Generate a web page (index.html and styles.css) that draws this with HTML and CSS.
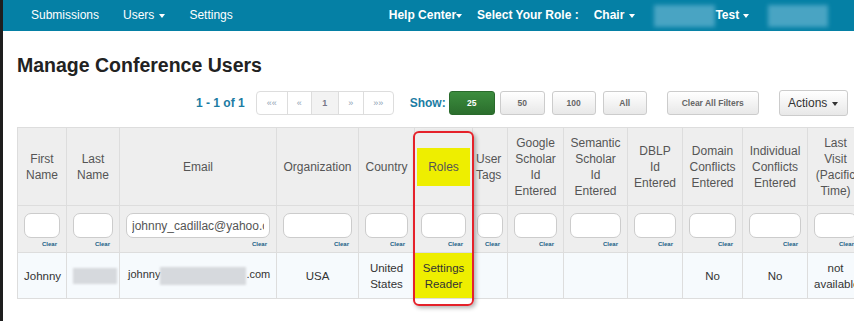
FILE: index.html
```html
<!DOCTYPE html>
<html lang="en">
<head>
    <meta charset="UTF-8">
    <meta name="viewport" content="width=device-width, initial-scale=1.0">
    <title>Manage Conference Users</title>
    <link rel="stylesheet" href="styles.css">
</head>
<body>
    <div class="page">
        <nav class="topbar">
            <ul class="nav-left">
                <li>Submissions</li>
                <li>Users<span class="caret"></span></li>
                <li>Settings</li>
            </ul>
            <ul class="nav-right">
                <li class="help">Help Center<span class="caret tight"></span></li>
                <li class="role-label">Select Your Role :</li>
                <li class="role">Chair<span class="caret"></span></li>
                <li class="user"><span class="blurred wide"></span>Test<span class="caret"></span></li>
                <li class="conf"><span class="blurred"></span></li>
            </ul>
        </nav>

        <div class="content">
            <h1>Manage Conference Users</h1>

            <div class="toolbar">
                <span class="count">1 - 1 of 1</span>
                <ul class="pager">
                    <li class="p-first">&laquo;&laquo;</li>
                    <li class="p-prev">&laquo;</li>
                    <li class="p-num active">1</li>
                    <li class="p-next">&raquo;</li>
                    <li class="p-last">&raquo;&raquo;</li>
                </ul>
                <span class="show-label">Show:</span>
                <button class="btn btn-25 selected">25</button>
                <button class="btn btn-50">50</button>
                <button class="btn btn-100">100</button>
                <button class="btn btn-all">All</button>
                <button class="btn btn-clear">Clear All Filters</button>
                <button class="btn btn-actions">Actions<span class="caret dark"></span></button>
            </div>

            <div class="table-wrap">
                <table class="users">
                    <colgroup>
                        <col class="c-first">
                        <col class="c-last">
                        <col class="c-email">
                        <col class="c-org">
                        <col class="c-country">
                        <col class="c-roles">
                        <col class="c-tags">
                        <col class="c-google">
                        <col class="c-semantic">
                        <col class="c-dblp">
                        <col class="c-domain">
                        <col class="c-indiv">
                        <col class="c-visit">
                    </colgroup>
                    <thead>
                        <tr class="head-row">
                            <th>First Name</th>
                            <th>Last Name</th>
                            <th>Email</th>
                            <th>Organization</th>
                            <th>Country</th>
                            <th class="roles-head"><span class="mark">Roles</span></th>
                            <th class="narrow">User Tags</th>
                            <th>Google Scholar Id Entered</th>
                            <th>Semantic Scholar Id Entered</th>
                            <th>DBLP Id Entered</th>
                            <th>Domain Conflicts Entered</th>
                            <th>Individual Conflicts Entered</th>
                            <th>Last Visit (Pacific Time)</th>
                        </tr>
                        <tr class="filter-row">
                            <td><input type="text"><div class="clear">Clear</div></td>
                            <td><input type="text"><div class="clear">Clear</div></td>
                            <td><input type="text" value="johnny_cadillac@yahoo.com"><div class="clear">Clear</div></td>
                            <td><input type="text"><div class="clear">Clear</div></td>
                            <td><input type="text"><div class="clear">Clear</div></td>
                            <td><input type="text"><div class="clear">Clear</div></td>
                            <td class="narrow"><input type="text"><div class="clear">Clear</div></td>
                            <td><input type="text"><div class="clear">Clear</div></td>
                            <td><input type="text"><div class="clear">Clear</div></td>
                            <td><input type="text"><div class="clear">Clear</div></td>
                            <td><input type="text"><div class="clear">Clear</div></td>
                            <td><input type="text"><div class="clear">Clear</div></td>
                            <td><input type="text"><div class="clear">Clear</div></td>
                        </tr>
                    </thead>
                    <tbody>
                        <tr class="data-row">
                            <td>Johnny</td>
                            <td><span class="blurred cell-blur"></span></td>
                            <td class="email">johnny<span class="blurred mail-blur"></span>.com</td>
                            <td>USA</td>
                            <td>United States</td>
                            <td class="roles-cell">Settings Reader</td>
                            <td></td>
                            <td></td>
                            <td></td>
                            <td></td>
                            <td>No</td>
                            <td>No</td>
                            <td>not available</td>
                        </tr>
                    </tbody>
                </table>
                <div class="callout"></div>
            </div>
        </div>
    </div>
</body>
</html>
```

FILE: styles.css
```css
* {
    margin: 0;
    padding: 0;
    box-sizing: border-box;
    font-family: "Liberation Sans", Arial, sans-serif;
}

html, body {
    overflow: hidden;
    background-color: white;
}

.page {
    border-left: 3px solid #1e1e1e;
    min-height: 321px;
}

/* top navigation */

.topbar {
    display: flex;
    height: 31px;
    background-color: #0580a5;
    color: white;
    font-size: 12px;
    line-height: 31px;
}

.topbar ul {
    display: flex;
    list-style: none;
}

.nav-left {
    padding-left: 16px;
}

.nav-left li {
    padding: 0 12px;
}

.nav-right {
    margin-left: 144px;
    font-weight: bold;
}

.nav-right li {
    display: flex;
    align-items: center;
}

.role-label {
    margin-left: 15px;
}

.role {
    margin-left: 15px;
}

.user {
    margin-left: 19px;
}

.conf {
    margin-left: 19px;
}

.caret {
    display: inline-block;
    width: 0;
    height: 0;
    margin-left: 5px;
    border-top: 4px solid white;
    border-left: 3.5px solid transparent;
    border-right: 3.5px solid transparent;
    vertical-align: middle;
}

.caret.tight {
    margin-left: 0;
}

.user .caret {
    margin-left: 4px;
}

.caret.dark {
    border-top-color: #333;
    margin-left: 5px;
}

.blurred {
    display: inline-block;
    background-color: #5aaecb;
    filter: blur(2px);
}

.topbar .blurred {
    width: 60px;
    height: 22px;
    opacity: 0.8;
}

.topbar .blurred.wide {
    width: 61px;
}

/* page content */

.content {
    padding-left: 14px;
}

h1 {
    margin-top: 23px;
    font-size: 19.5px;
    line-height: 22px;
    color: #222;
    font-weight: bold;
}

.toolbar {
    display: flex;
    align-items: center;
    height: 26px;
    margin-top: 14px;
}

.count {
    margin-left: 179px;
    color: #1b7ca3;
    font-size: 12px;
    font-weight: bold;
}

.pager {
    display: flex;
    list-style: none;
    height: 24px;
    margin-left: 11px;
    border: 1px solid #ddd;
    border-radius: 4px;
    overflow: hidden;
}

.pager li {
    display: flex;
    align-items: center;
    justify-content: center;
    border-left: 1px solid #ddd;
    color: #8fa3b3;
    font-size: 9px;
}

.pager li:first-child {
    border-left: none;
}

.pager .p-first { width: 30px; }
.pager .p-prev { width: 24px; }
.pager .p-num { width: 27px; }
.pager .p-next { width: 25px; }
.pager .p-last { width: 30px; }

.pager .active {
    background-color: #f3f3f3;
    color: #778;
    font-weight: bold;
}

.show-label {
    margin-left: 16px;
    color: #1b7ca3;
    font-size: 12px;
    font-weight: bold;
}

.btn {
    height: 24px;
    margin-left: 6px;
    border: 1px solid #ccc;
    border-radius: 3px;
    background: linear-gradient(#ffffff, #e8e8e8);
    color: #666;
    font-size: 8.5px;
    font-weight: bold;
}

.btn-25 {
    width: 46px;
    margin-left: 3px;
}

.btn-50 {
    width: 45px;
    margin-left: 5px;
}

.btn-100 {
    width: 44px;
    margin-left: 7px;
}

.btn-all {
    width: 44px;
    margin-left: 7px;
}

.btn-clear {
    width: 92px;
    margin-left: 20px;
}

.btn-actions {
    width: 69px;
    height: 26px;
    margin-left: 20px;
    color: #333;
    font-size: 12px;
    font-weight: normal;
}

.btn.selected {
    background: linear-gradient(#3c8d3e, #2b6e2d);
    border-color: #2a6a2c;
    color: white;
}

/* table */

.table-wrap {
    position: relative;
    margin-top: 11px;
}

.users {
    width: 846px;
    table-layout: fixed;
    border-collapse: collapse;
    border: 1px solid #ddd;
}

.c-first { width: 49px; }
.c-last { width: 53px; }
.c-email { width: 157px; }
.c-org { width: 82px; }
.c-country { width: 56px; }
.c-roles { width: 58px; }
.c-tags { width: 35px; }
.c-google { width: 56px; }
.c-semantic { width: 64px; }
.c-dblp { width: 55px; }
.c-domain { width: 60px; }
.c-indiv { width: 65px; }
.c-visit { width: 56px; }

.users th,
.users td {
    border: 1px solid #ddd;
}

.users th {
    height: 78px;
    padding: 0 6px;
    background-color: #eeeeee;
    color: #555;
    font-size: 12px;
    font-weight: normal;
    line-height: 16px;
    text-align: center;
    vertical-align: middle;
}

.users th.narrow {
    padding: 0 3px;
    text-align: left;
}

.roles-head .mark {
    display: block;
    margin: 0 -4px;
    padding: 11px 0;
    background-color: #eeee00;
}

.filter-row td {
    height: 47px;
    padding: 7px 6px 0;
    background-color: #eeeeee;
    vertical-align: top;
}

.filter-row td.narrow {
    padding: 7px 4px 0;
}

.filter-row input {
    display: block;
    width: 100%;
    height: 25px;
    padding: 0 5px;
    border: 1px solid #ccc;
    border-radius: 7px;
    background-color: white;
    color: #555;
    font-size: 12px;
}

.clear {
    margin-top: 3px;
    padding-right: 3px;
    color: #1a5f86;
    font-size: 6px;
    font-weight: bold;
    line-height: 7px;
    text-align: right;
}

.data-row td {
    height: 46px;
    padding: 0 6px;
    background-color: #f6fafd;
    color: #333;
    font-size: 11.5px;
    line-height: 16px;
    text-align: center;
    vertical-align: middle;
}

.data-row td.email {
    padding-left: 8px;
    font-size: 11px;
    text-align: left;
    white-space: nowrap;
}

.data-row td.roles-cell {
    background-color: #eeee00;
}

.cell-blur {
    width: 44px;
    height: 16px;
    background-color: #d6d9dd;
    filter: blur(1px);
    vertical-align: middle;
}

.mail-blur {
    width: 86px;
    height: 18px;
    background-color: #d6d9dd;
    filter: blur(1px);
    vertical-align: middle;
}

/* highlight drawn on top of the roles column */
.callout {
    position: absolute;
    left: 396px;
    top: 4px;
    width: 61px;
    height: 175px;
    border: 2px solid #e5212a;
    border-radius: 6px;
    box-shadow: 2px 2px 4px rgba(0, 0, 0, 0.3);
    pointer-events: none;
}
```
